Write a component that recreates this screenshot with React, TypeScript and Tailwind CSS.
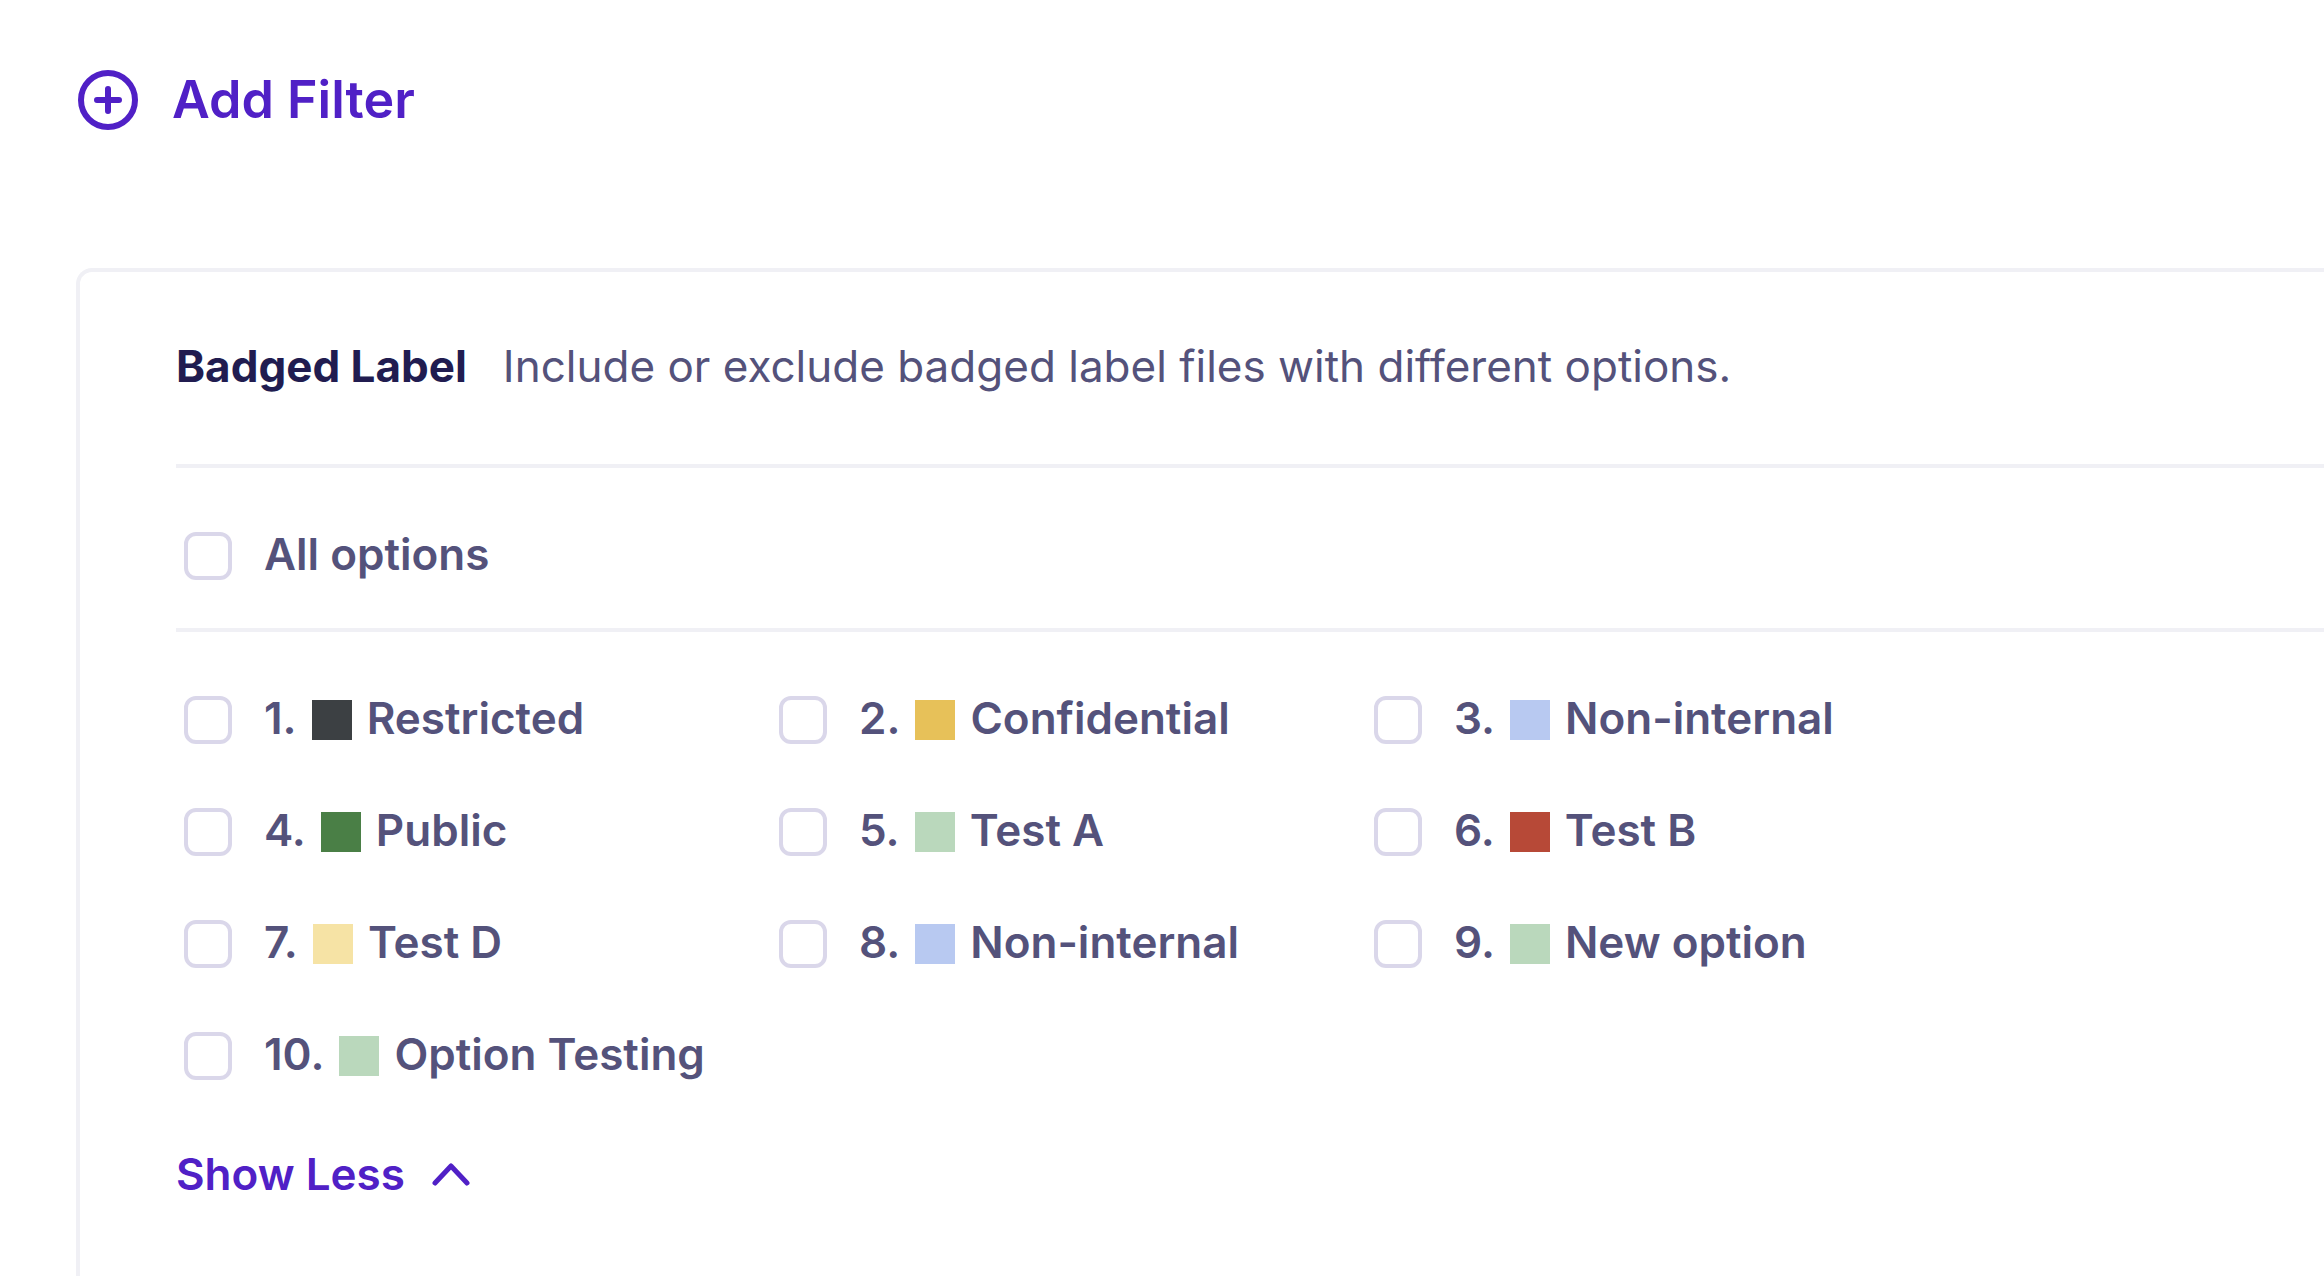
import { useState } from 'react';

type Option = { name: string; swatch: string };

const options: Option[] = [
  { name: 'Restricted', swatch: 'bg-[#3c4043]' },
  { name: 'Confidential', swatch: 'bg-[#e7c159]' },
  { name: 'Non-internal', swatch: 'bg-[#b8c9f1]' },
  { name: 'Public', swatch: 'bg-[#4a7f46]' },
  { name: 'Test A', swatch: 'bg-[#bad8bc]' },
  { name: 'Test B', swatch: 'bg-[#b74937]' },
  { name: 'Test D', swatch: 'bg-[#f6e3a5]' },
  { name: 'Non-internal', swatch: 'bg-[#b8c9f1]' },
  { name: 'New option', swatch: 'bg-[#bad8bc]' },
  { name: 'Option Testing', swatch: 'bg-[#bad8bc]' },
];

function Checkbox({ id }: { id: string }) {
  return (
    <input
      id={id}
      type="checkbox"
      className="size-12 shrink-0 appearance-none rounded-xl border-4 border-[#dad7ea] bg-white checked:border-[#5020c6] checked:bg-[#5020c6]"
    />
  );
}

export default function App() {
  const [expanded, setExpanded] = useState(true);
  const visible = expanded ? options : options.slice(0, 3);

  return (
    <div className="flex min-h-screen flex-col bg-white pl-[76px] pt-[70px] font-['Inter',sans-serif] text-[44px] leading-[48px] text-[#54527b]">
      <button type="button" className="flex items-center gap-[34px] self-start pl-[2px] text-[52px] font-semibold leading-[60px] text-[#5020c6]">
        <svg className="size-[60px]" viewBox="0 0 60 60" fill="none" stroke="currentColor" strokeWidth="6" strokeLinecap="round" aria-hidden="true">
          <circle cx="30" cy="30" r="27" />
          <path d="M30 19v22M19 30h22" />
        </svg>
        Add Filter
      </button>

      <section className="mt-[138px] flex-1 rounded-tl-2xl border-l-4 border-t-4 border-[#f0f0f5] pl-24">
        <header className="flex flex-wrap items-baseline gap-x-9 border-b-4 border-[#f0f0f5] pb-[74px] pt-[70px]">
          <h2 className="font-bold text-[#211c50]">Badged Label</h2>
          <p>Include or exclude badged label files with different options.</p>
        </header>

        <div className="flex items-center gap-8 border-b-4 border-[#f0f0f5] pb-12 pl-2 pt-16 font-semibold">
          <Checkbox id="all-options" />
          <label htmlFor="all-options" className="pb-1 leading-[44px]">All options</label>
        </div>

        <ul className="grid grid-cols-[repeat(auto-fill,595px)] gap-y-16 pl-2 pt-16 font-semibold">
          {visible.map((option, i) => (
            <li key={i} className="flex items-center gap-8">
              <Checkbox id={`option-${i + 1}`} />
              <label htmlFor={`option-${i + 1}`} className="flex items-center gap-[15px] leading-[44px]">
                <span className="pb-1">{i + 1}.</span>
                <span className={`size-10 ${option.swatch}`} />
                <span className="pb-1">{option.name}</span>
              </label>
            </li>
          ))}
        </ul>

        <button
          type="button"
          aria-expanded={expanded}
          onClick={() => setExpanded(!expanded)}
          className="mb-16 mt-[70px] flex items-center gap-[26px] font-semibold text-[#5020c6]"
        >
          {expanded ? 'Show Less' : 'Show More'}
          <svg
            className={expanded ? 'h-6 w-10' : 'h-6 w-10 rotate-180'}
            viewBox="0 0 40 24"
            fill="none"
            stroke="currentColor"
            strokeWidth="5"
            strokeLinecap="round"
            strokeLinejoin="round"
            aria-hidden="true"
          >
            <path d="M4 21 20 4l16 17" />
          </svg>
        </button>
      </section>
    </div>
  );
}
